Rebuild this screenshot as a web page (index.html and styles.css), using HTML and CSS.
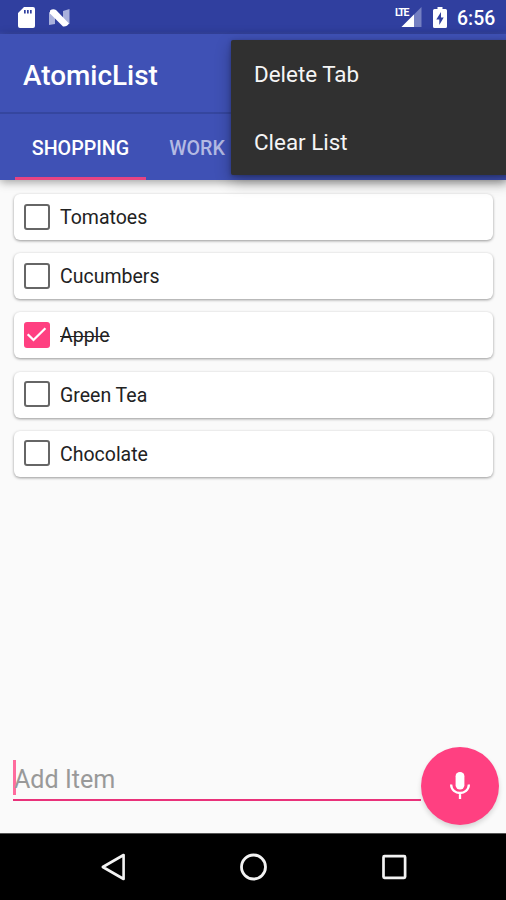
FILE: index.html
```html
<!DOCTYPE html>
<html lang="en">
<head>
<meta charset="utf-8">
<title>AtomicList</title>
<link rel="stylesheet" href="styles.css">
</head>
<body>
<div class="screen">
  <header class="statusbar">
    <svg class="sd" width="17" height="21" viewBox="0 0 17 21"><path fill="#fff" fill-rule="evenodd" d="M6 0H15Q17 0 17 2V19Q17 21 15 21H2Q0 21 0 19V6ZM6 3V6.5H7.7V3ZM9 3V6.5H10.7V3ZM12 3V6.5H13.7V3Z"/></svg>
    <svg class="nougat" width="21" height="18" viewBox="0 0 21 18"><path fill="#a9b1dc" d="M0 3L6 5V15L0 16ZM14 2L20.5 0V15L14 13Z"/><path fill="#fff" d="M1 1.5Q4-.5 7 1L20 14.5Q18 18 14 17.5L1 4.5Z"/></svg>
    <span class="spacer"></span>
    <span class="signal"><svg width="22" height="20" viewBox="0 0 22 20"><path fill="#7580c2" d="M21.5 0V20H1.5Z"/><path fill="#fff" d="M14 7.5V20H1.5Z"/></svg><span class="lte">LTE</span></span>
    <svg class="battery" width="14" height="21" viewBox="0 0 14 21"><path fill="#fff" d="M4.5 0H9.5V2H12.5Q14 2 14 3.5V19.5Q14 21 12.5 21H1.5Q0 21 0 19.5V3.5Q0 2 1.5 2H4.5Z"/><path fill="#303f9f" d="M8 5L3.3 12.5H6.3V18L10.7 10.5H8Z"/></svg>
    <time class="clock">6:56</time>
  </header>
  <div class="appbar">
    <h1 class="title">AtomicList</h1>
    <nav class="tabs">
      <span class="tab active">SHOPPING</span>
      <span class="tab">WORK</span>
    </nav>
  </div>
  <div class="menu">
    <span class="option">Delete Tab</span>
    <span class="option">Clear List</span>
  </div>
  <main class="content">
    <ul class="list">
      <li class="card"><span class="box"></span><span class="label">Tomatoes</span></li>
      <li class="card"><span class="box"></span><span class="label">Cucumbers</span></li>
      <li class="card"><span class="box checked"><svg width="25" height="25" viewBox="0 0 25 25"><path fill="none" stroke="#fff" stroke-width="2.3" d="M3.7 12.2L9.5 18L21.4 6.3"/></svg></span><span class="label done">Apple</span></li>
      <li class="card"><span class="box"></span><span class="label">Green Tea</span></li>
      <li class="card"><span class="box"></span><span class="label">Chocolate</span></li>
    </ul>
    <div class="composer">
      <div class="field"><span class="hint">Add Item</span></div>
      <div class="fab"><svg width="22" height="30" viewBox="0 0 22 30"><rect x="6.6" y="1" width="8.8" height="17.4" rx="4.2" fill="#fff"/><path fill="none" stroke="#fff" stroke-width="2.3" d="M2.1 13.5C2.5 24.8 19.5 24.8 19.9 13.5M11 22V28"/></svg></div>
    </div>
  </main>
  <footer class="navbar">
    <svg width="26" height="30" viewBox="0 0 26 30"><path fill="none" stroke="#f3f3f3" stroke-width="2.6" stroke-linejoin="round" d="M2.8 15L23.6 3V27Z"/></svg>
    <svg width="28" height="30" viewBox="0 0 28 30"><circle cx="13.5" cy="15" r="12" fill="none" stroke="#f3f3f3" stroke-width="2.8"/></svg>
    <svg width="26" height="30" viewBox="0 0 26 30"><rect x="2.5" y="4.2" width="21.6" height="21.6" rx="1" fill="none" stroke="#f3f3f3" stroke-width="2.7"/></svg>
  </footer>
</div>
</body>
</html>
```

FILE: styles.css
```css
* { box-sizing: border-box; }
body { margin: 0; font-family: Roboto, "Liberation Sans", sans-serif; }
svg { display: block; flex: none; }
.screen { position: relative; width: 506px; height: 900px; display: flex; flex-direction: column; overflow: hidden; background: #fafafa; }
.statusbar { height: 34px; flex: none; display: flex; align-items: flex-start; padding: 7px 10px 0 18px; background: linear-gradient(#303f9f 31px, #3949aa); }
.nougat { margin: 2px 0 0 14px; }
.spacer { flex: 1; }
.signal { position: relative; margin-right: 11px; }
.lte { position: absolute; left: -5px; top: 0; height: 11px; padding-right: 1px; font-size: 10.5px; font-weight: 700; line-height: 11px; letter-spacing: -1.3px; color: #fff; background: #303f9f; }
.clock { width: 39px; margin-left: 10px; font-size: 19.4px; font-weight: 500; line-height: 23px; color: #fff; white-space: nowrap; }
.appbar { height: 146px; flex: none; display: flex; flex-direction: column; background: #3f51b5; box-shadow: 0 2px 9px rgba(0,0,0,.38); z-index: 1; }
.title { height: 80px; margin: 0; padding-left: 23px; font-size: 27.9px; font-weight: 500; line-height: 83px; color: #fff; border-bottom: 2px solid #35469f; }
.tabs { display: flex; flex: 1; padding-left: 15px; }
.tab { width: 131px; display: flex; align-items: center; justify-content: center; padding-top: 2px; font-size: 19.7px; font-weight: 500; color: #b3bae3; }
.tab.active { color: #fff; box-shadow: inset 0 -3px #e64482; }
.tab + .tab { width: 102px; }
.menu { position: absolute; left: 231px; top: 40px; width: 280px; height: 135px; z-index: 2; display: flex; flex-direction: column; padding-left: 23px; border-radius: 2px; background: #303030; box-shadow: 0 6px 16px rgba(0,0,0,.3), 0 1px 4px rgba(0,0,0,.25); }
.option { height: 67.5px; font-size: 22.4px; line-height: 69px; color: #f5f5f5; }
.content { flex: 1; display: flex; flex-direction: column; justify-content: space-between; padding: 14px 7px 8px 14px; }
.list { display: grid; gap: 13.2px; margin: 0; padding: 0; list-style: none; }
.card { width: 479px; height: 46px; display: flex; align-items: center; padding: 0 0 1px 10px; border-radius: 6px; background: #fff; box-shadow: 0 1px 3px rgba(0,0,0,.4); }
.box { width: 26px; height: 26px; border: 2.4px solid #666; border-radius: 3px; }
.box.checked { border: 0; background: #ff4081; }
.label { margin: 3px 0 0 10px; font-size: 19.5px; line-height: 26px; color: #222; }
.done { text-decoration: line-through; text-decoration-thickness: 1px; }
.composer { display: flex; align-items: flex-start; margin-left: -1px; }
.field { width: 408px; height: 41px; margin-top: 13px; border-bottom: 2.5px solid #e9317a; }
.hint { display: block; height: 35px; border-left: 3px solid #ff6c9e; font-size: 25.1px; line-height: 40px; color: #999; text-indent: -2px; }
.fab { width: 78px; height: 78px; display: flex; align-items: center; justify-content: center; border-radius: 50%; background: #ff4081; box-shadow: 0 3px 5px rgba(0,0,0,.14); }
.navbar { height: 67px; flex: none; display: flex; align-items: center; justify-content: space-between; padding: 0 99px 0 100px; background: #000; border-top: 1px solid #555; }
```
